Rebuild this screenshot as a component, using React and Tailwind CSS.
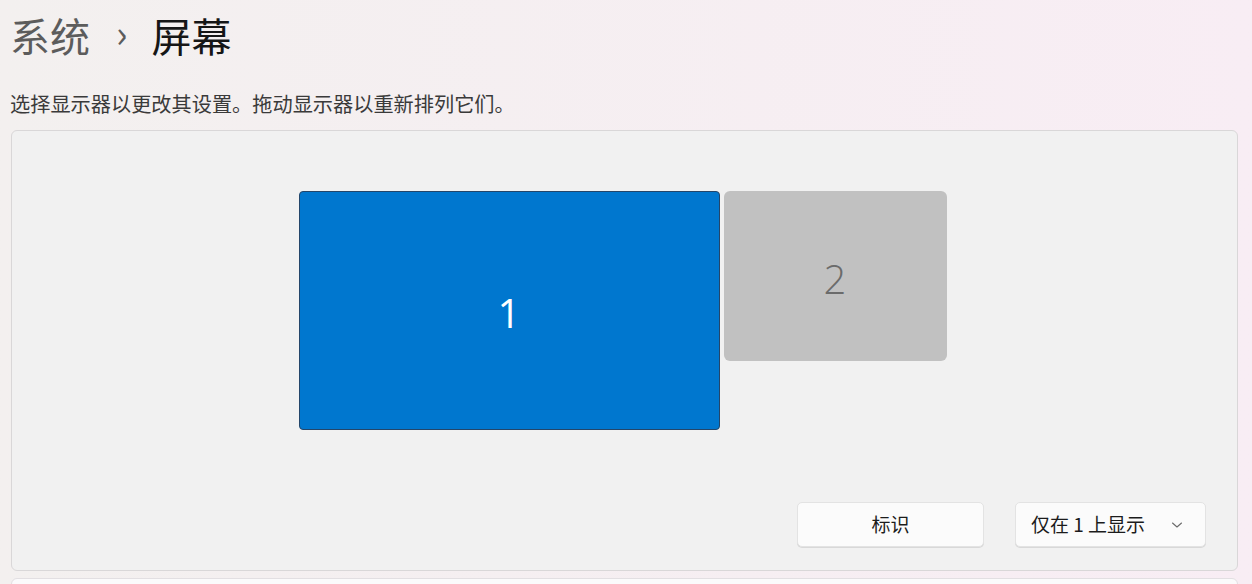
import React from "react";

const cjk = { fontFamily: '"Noto Sans CJK SC", "Noto Sans", sans-serif' };
const digit = { fontFamily: '"Open Sans", "Noto Sans", sans-serif' };

export default function App() {
  return (
    <div
      className="w-[1252px] h-[584px] overflow-hidden bg-gradient-to-r from-[#f3f0ef] to-[#f8edf4] text-[#1a1a1a]"
      style={cjk}
    >
      <div className="pl-[10px] pt-[16px] flex items-center h-[54px] text-[40px] leading-none">
        <span className="text-[#5c5c5c]">系统</span>
        <span className="text-[#5c5c5c] text-[38px] ml-[26px] mr-[24px] -mt-[6px]">›</span>
        <span className="text-[#161616] font-normal">屏幕</span>
      </div>
      <div className="pl-[10px] mt-[38px] text-[20.2px] leading-[24px] text-[#3a3a3a]">
        选择显示器以更改其设置。拖动显示器以重新排列它们。
      </div>
      <div className="ml-[11px] mt-[14px] w-[1227px] h-[441px] rounded-[6px] border border-[#d9d7d8] bg-[#f1f1f1] flex flex-col">
        <div className="flex justify-center items-start gap-[4px] pt-[60px] pr-[4px]">
          <div className="w-[421px] h-[239px] rounded-[4px] bg-[#0077cf] border border-[#24466a] flex items-center justify-center">
            <span className="text-white text-[40px] font-normal leading-none mt-[4px]" style={digit}>
              1
            </span>
          </div>
          <div className="w-[223px] h-[170px] rounded-[6px] bg-[#c1c1c1] flex items-center justify-center">
            <span className="text-[#6b6b6b] text-[40px] font-light leading-none mt-[6px]" style={digit}>
              2
            </span>
          </div>
        </div>
        <div className="flex justify-end gap-[31px] pr-[31px] mt-[72px]">
          <div className="w-[187px] h-[45px] rounded-[5px] bg-[#fbfbfb] border border-[#e3e3e3] shadow-[0_1px_0_#d8d8d8] flex items-center justify-center text-[19px] text-[#1c1c1c]">
            标识
          </div>
          <div className="w-[191px] h-[45px] rounded-[5px] bg-[#fbfbfb] border border-[#e3e3e3] shadow-[0_1px_0_#d8d8d8] flex items-center pl-[15px] pr-[22px] text-[19px] text-[#1c1c1c]">
            <span>仅在 1 上显示</span>
            <svg className="ml-auto" width="12" height="8" viewBox="0 0 12 8" fill="none">
              <path d="M1.5 2 L6 6 L10.5 2" stroke="#6a6a6a" strokeWidth="1.1" strokeLinecap="round" strokeLinejoin="round" />
            </svg>
          </div>
        </div>
      </div>
      <div className="ml-[11px] mt-[7px] w-[1227px] h-[40px] rounded-[6px] border border-[#e2dfe2] bg-[#fbfafb]" />
    </div>
  );
}
